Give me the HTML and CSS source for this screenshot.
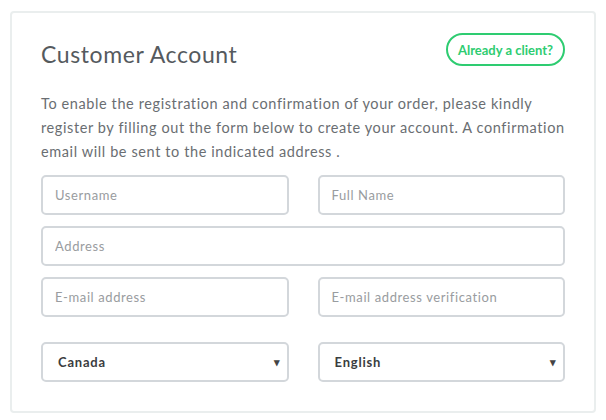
FILE: index.html
```html
<!DOCTYPE html>
<html>
<head>
<meta charset="utf-8">
<link rel="stylesheet" href="styles.css">
</head>
<body>
<div class="card">
  <div class="header">
    <h1 class="title">Customer Account</h1>
    <a class="client-btn">Already a client?</a>
  </div>
  <p class="intro">To enable the registration and confirmation of your order, please kindly register by filling out the form below to create your account. A confirmation email will be sent to the indicated address .</p>
  <div class="form">
    <div class="row">
      <input class="field" placeholder="Username">
      <input class="field" placeholder="Full Name">
    </div>
    <div class="row single">
      <input class="field" placeholder="Address">
    </div>
    <div class="row">
      <input class="field" placeholder="E-mail address">
      <input class="field" placeholder="E-mail address verification">
    </div>
    <div class="row selects">
      <div class="select"><span>Canada</span><span class="arrow">▾</span></div>
      <div class="select"><span>English</span><span class="arrow">▾</span></div>
    </div>
  </div>
</div>
</body>
</html>
```
FILE: styles.css
```css
html, body { margin: 0; padding: 0; background: #fff; }
body { font-family: "Lato", "Open Sans", sans-serif; }
.card {
  margin: 11px 0 0 10px;
  width: 586px;
  height: 402px;
  box-sizing: border-box;
  border: 2px solid #eaeeee;
  border-radius: 4px;
  padding: 19px 29px 0 29px;
}
.header { display: flex; justify-content: space-between; align-items: flex-start; }
.title {
  margin: 8px 0 0 0;
  font-weight: 400;
  font-size: 23px;
  color: #555a5e;
  letter-spacing: 0.6px;
}
.client-btn {
  margin-top: 1px;
  border: 2px solid #2ecc71;
  border-radius: 17px;
  height: 33px;
  box-sizing: border-box;
  padding: 0 10px;
  display: flex; align-items: center;
  color: #2ecc71;
  font-weight: 700;
  font-size: 13px;
}
.intro {
  margin: 24px 0 0 0;
  font-size: 14.5px;
  line-height: 24px;
  color: #6a6e72;
  letter-spacing: 0.6px;
}
.form { margin-top: 11px; display: flex; flex-direction: column; gap: 11px; }
.row { display: grid; grid-template-columns: 1fr 1fr; column-gap: 29px; }
.row.single { grid-template-columns: 1fr; }
.row.selects { margin-top: 14px; }
.field, .select {
  height: 40px;
  box-sizing: border-box;
  border: 2px solid #d3d7db;
  border-radius: 5px;
  padding: 0 12px;
  font-family: inherit;
  font-size: 13px;
  color: #333;
  background: #fff;
  outline: none;
}
.field::placeholder { color: #999ca0; letter-spacing: 0.6px; }
.select {
  display: flex; align-items: center; justify-content: space-between;
  padding: 0 7px 0 15px;
  font-weight: 700;
  color: #3a3d40;
  letter-spacing: 0.8px;
}
.arrow { font-size: 11px; color: #444; letter-spacing: 0; }
```
